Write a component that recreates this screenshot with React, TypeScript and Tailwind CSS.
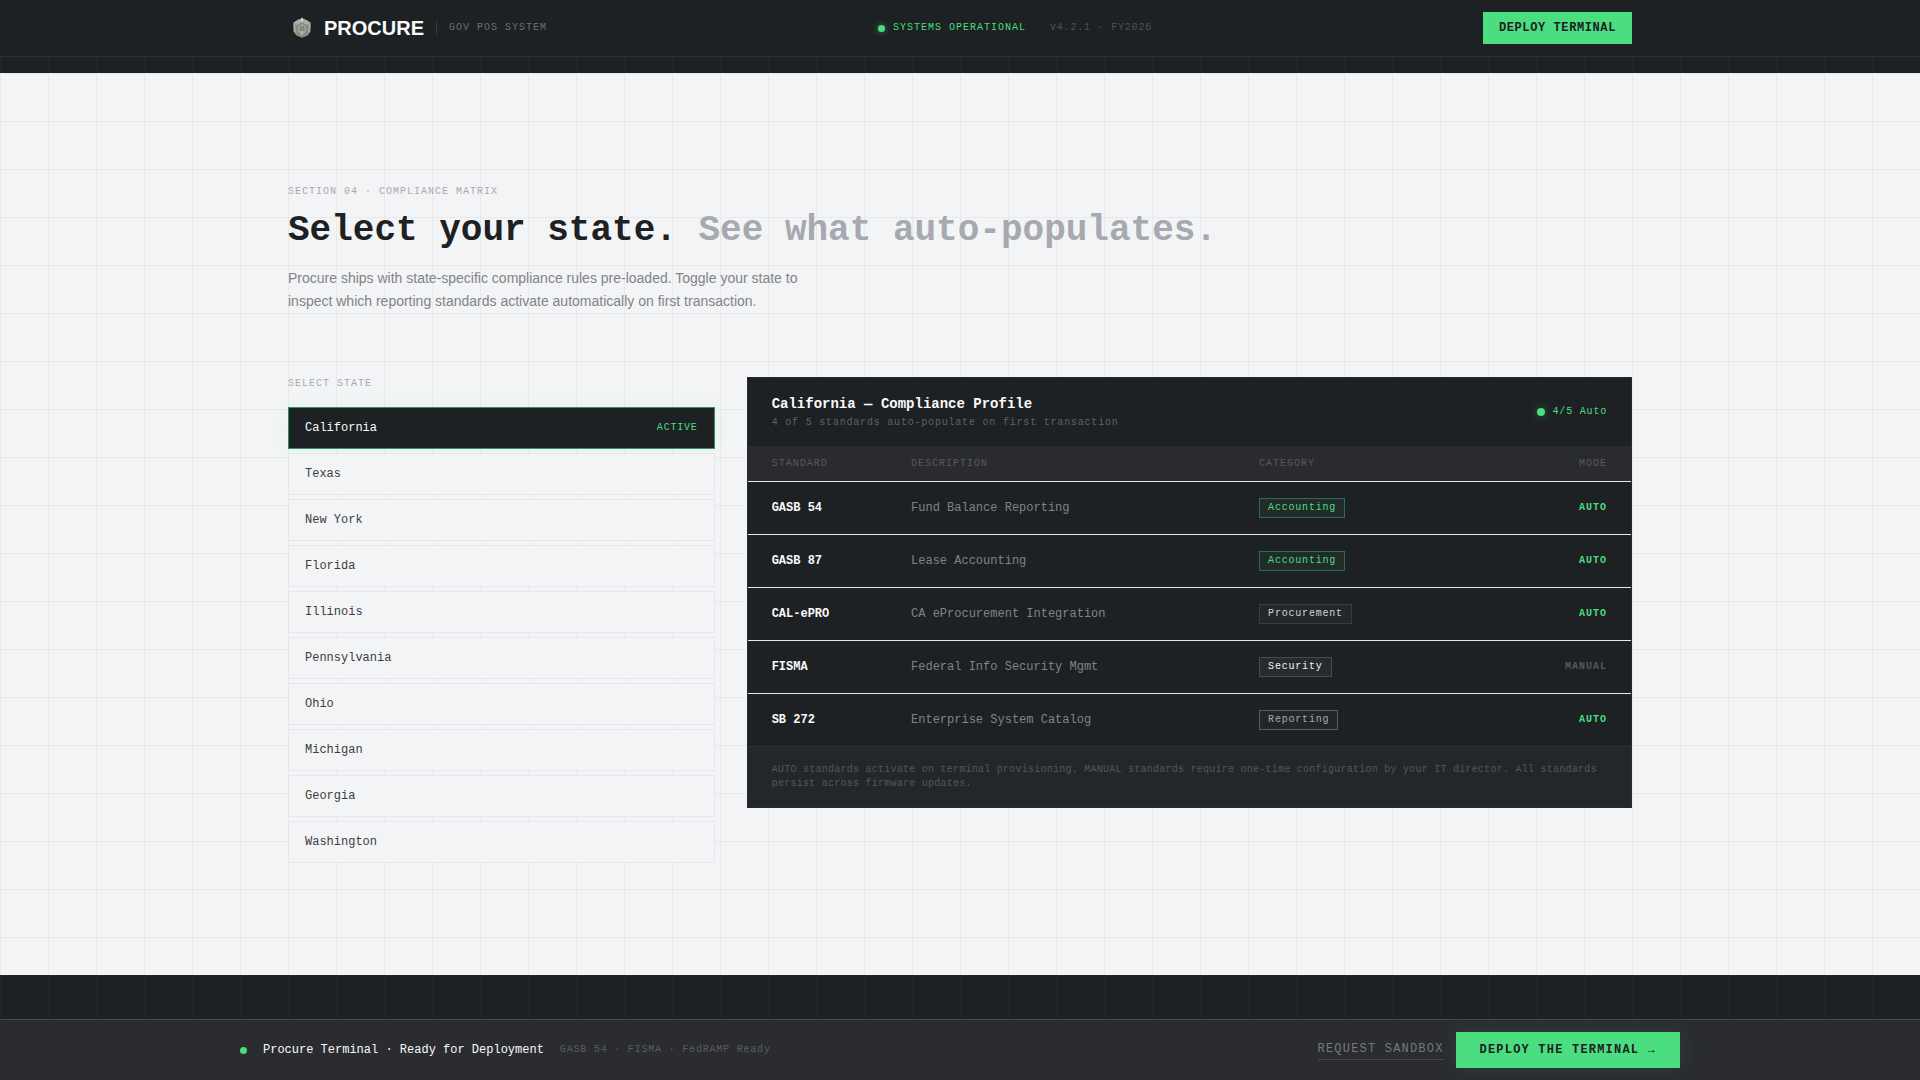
import { useState } from "react";
import clsx from "clsx";

type Category = "Accounting" | "Procurement" | "Security" | "Reporting";

interface Standard {
  code: string;
  description: string;
  category: Category;
  auto: boolean;
}

const STATES = [
  "California",
  "Texas",
  "New York",
  "Florida",
  "Illinois",
  "Pennsylvania",
  "Ohio",
  "Michigan",
  "Georgia",
  "Washington",
];

const STANDARDS: Standard[] = [
  { code: "GASB 54", description: "Fund Balance Reporting", category: "Accounting", auto: true },
  { code: "GASB 87", description: "Lease Accounting", category: "Accounting", auto: true },
  { code: "CAL-ePRO", description: "CA eProcurement Integration", category: "Procurement", auto: true },
  { code: "FISMA", description: "Federal Info Security Mgmt", category: "Security", auto: false },
  { code: "SB 272", description: "Enterprise System Catalog", category: "Reporting", auto: true },
];

const CATEGORY_STYLES: Record<Category, string> = {
  Accounting: "border-[#2f6a4a] bg-[#212b2a] text-[#4ade80]",
  Procurement: "border-[#3a3d40] bg-[#25282b] text-[#d1d5db]",
  Security: "border-[#484b4e] bg-[#282b2e] text-[#f3f4f6]",
  Reporting: "border-[#5a5d60] bg-[#232629] text-[#a7a9af]",
};

function Logo() {
  return (
    <svg className="size-7" viewBox="0 0 28 28" aria-hidden="true">
      <path d="M14 4.5 18.5 6 22.8 9 22.5 17.8 19.5 21.5 14 23.8 8.5 21.5 5.5 17.8 5.2 9 9.5 6Z" fill="#8f938e" />
      <path d="M14 4.5 18.5 6 22.8 9 18.5 11 14 8.5 9.5 11 5.2 9 9.5 6Z" fill="#a9ada8" />
      <path d="M9 12 14 9 19 12 18.5 18.5 14 21.5 9.5 18.5Z" fill="#a0a39a" stroke="#737771" strokeWidth="0.8" />
      <path d="M12 12.5h4v4h-4z" fill="#8b8e83" stroke="#777a71" strokeWidth="0.6" />
      <path d="M13 17.5h2v3.5h-2z" fill="#b9b999" />
      <path d="M14 3 15.3 6 14 7.5 12.7 6Z" fill="#e1e4e0" />
      <path d="M6.3 10 7.2 18M21.7 10 20.8 18" stroke="#b4b8b2" strokeWidth="1" fill="none" />
    </svg>
  );
}

function Header() {
  return (
    <header className="border-b border-[#2c3033] bg-[#1d2123]">
      <div className="mx-auto flex h-14 max-w-[1440px] items-center justify-between px-12">
        <div className="flex items-center">
          <Logo />
          <span className="ml-2 font-['Liberation_Sans',sans-serif] text-xl font-bold text-[#f9fafb]">PROCURE</span>
          <span className="ml-3 h-3.5 w-px bg-[#3a3d42]" />
          <span className="ml-3 text-[10px] leading-4 tracking-widest text-[#6b6e72]">GOV POS SYSTEM</span>
        </div>
        <div className="flex items-center gap-6 text-[10px] leading-4">
          <div className="flex items-center gap-2 text-[#4ade80]">
            <span className="mt-px size-[7px] rounded-full bg-[#4ade80] shadow-[0_0_6px_rgba(74,222,128,0.6)]" />
            <span className="tracking-widest">SYSTEMS OPERATIONAL</span>
          </div>
          <span className="tracking-[0.08em] text-[#505357]">v4.2.1 · FY2026</span>
        </div>
        <button type="button" className="h-8 bg-[#4ade80] px-4 text-xs font-bold tracking-wider text-[#1d2123]">
          DEPLOY TERMINAL
        </button>
      </div>
    </header>
  );
}

function StatePicker({ selected, onSelect }: { selected: string; onSelect: (name: string) => void }) {
  return (
    <div className="col-span-4">
      <p className="mb-4 text-[10px] leading-[14px] tracking-widest text-[#a7a9af]">SELECT STATE</p>
      <div className="flex flex-col gap-1">
        {STATES.map((name) => {
          const active = name === selected;
          return (
            <button
              key={name}
              type="button"
              onClick={() => onSelect(name)}
              className={clsx(
                "flex h-[42px] items-center justify-between border px-4 text-xs",
                active
                  ? "border-[#31915a] bg-[#1d2123] text-[#f9fafb] shadow-[0_0_20px_rgba(74,222,128,0.08)]"
                  : "border-[#e5e7ea] bg-[#f3f4f6] text-[#3a3d42]"
              )}
            >
              <span>{name}</span>
              {active && <span className="text-[10px] tracking-[0.08em] text-[#4ade80]">ACTIVE</span>}
            </button>
          );
        })}
      </div>
    </div>
  );
}

function ComplianceProfile({ state }: { state: string }) {
  const autoCount = STANDARDS.filter((s) => s.auto).length;

  return (
    <div className="col-span-8 self-start border border-[#2a2b30] bg-[#1d2123]">
      <div className="flex h-[68px] items-center justify-between px-6">
        <div>
          <h3 className="text-sm font-bold text-[#f9fafb]">{state} — Compliance Profile</h3>
          <p className="mt-px text-[10px] leading-4 tracking-[0.08em] text-[#5f6267]">
            {autoCount} of {STANDARDS.length} standards auto-populate on first transaction
          </p>
        </div>
        <div className="flex items-center gap-2 text-[#4ade80]">
          <span className="size-2 rounded-full bg-[#4ade80] shadow-[0_0_8px_rgba(74,222,128,0.4)]" />
          <span className="text-[10px] leading-4 tracking-[0.08em]">
            {autoCount}/{STANDARDS.length} Auto
          </span>
        </div>
      </div>

      <table className="w-full table-fixed border-separate border-spacing-0 text-left">
        <thead>
          <tr className="h-9 bg-[#2a2b30] text-[10px] tracking-widest text-[#57595e]">
            <th className="w-[18.5%] border-b border-[#e5e7eb] pl-6 font-normal">STANDARD</th>
            <th className="w-[39.4%] border-b border-[#e5e7eb] font-normal">DESCRIPTION</th>
            <th className="w-[23.6%] border-b border-[#e5e7eb] font-normal">CATEGORY</th>
            <th className="w-[18.5%] border-b border-[#e5e7eb] pr-6 text-right font-normal">MODE</th>
          </tr>
        </thead>
        <tbody className="text-xs [&>tr:last-child>td]:border-[#2f3235] [&_td]:h-[53px] [&_td]:border-b [&_td]:border-[#e5e7eb]">
          {STANDARDS.map((s) => (
            <tr key={s.code}>
              <td className="pl-6 font-bold text-[#f9fafb]">{s.code}</td>
              <td className="text-[#808388]">{s.description}</td>
              <td>
                <span
                  className={clsx(
                    "inline-block border px-2 text-[10px] leading-[18px] tracking-[0.08em]",
                    CATEGORY_STYLES[s.category]
                  )}
                >
                  {s.category}
                </span>
              </td>
              <td
                className={clsx(
                  "pr-6 text-right text-[10px] font-bold tracking-widest",
                  s.auto ? "text-[#4ade80]" : "text-[#55585d]"
                )}
              >
                {s.auto ? "AUTO" : "MANUAL"}
              </td>
            </tr>
          ))}
        </tbody>
      </table>

      <p className="bg-[#24272a] px-6 py-4 text-[10px] leading-[14px] tracking-wide text-[#53565b]">
        AUTO standards activate on terminal provisioning. MANUAL standards require one-time configuration by your IT
        director. All standards persist across firmware updates.
      </p>
    </div>
  );
}

function DeployBar() {
  return (
    <footer className="border-t border-[#3c4f4b] bg-[#2a2c30]">
      <div className="mx-auto flex h-[60px] max-w-[1440px] items-center justify-between">
        <div className="flex items-center gap-4">
          <span className="size-[7px] rounded-full bg-[#4ade80]" />
          <span className="text-xs text-[#f9fafb]">Procure Terminal · Ready for Deployment</span>
          <span className="text-[10px] leading-4 tracking-[0.08em] text-[#5a5d62]">GASB 54 · FISMA · FedRAMP Ready</span>
        </div>
        <div className="flex items-center gap-3">
          <a href="#sandbox" className="border-b border-[#45484d] pb-0.5 text-xs tracking-widest text-[#75787d]">
            REQUEST SANDBOX
          </a>
          <button
            type="button"
            className="h-9 bg-[#4ade80] px-6 text-xs font-bold tracking-widest text-[#1d2123] shadow-[0_0_20px_rgba(74,222,128,0.12)]"
          >
            DEPLOY THE TERMINAL →
          </button>
        </div>
      </div>
    </footer>
  );
}

export default function App() {
  const [selected, setSelected] = useState("California");

  return (
    <div className="flex min-h-screen flex-col bg-[#1d2123] bg-[linear-gradient(to_right,#23282a_1px,transparent_1px)] bg-[size:48px_48px] font-['Liberation_Mono',monospace]">
      <Header />
      <main className="mt-4 bg-[#f3f4f6] bg-[linear-gradient(to_right,#e7e9eb_1px,transparent_1px),linear-gradient(to_bottom,#e7e9eb_1px,transparent_1px)] bg-[size:48px_48px] py-28">
        <div className="mx-auto max-w-[1440px] px-12">
          <p className="mb-3 text-[10px] leading-[14px] tracking-widest text-[#a7a9af]">
            SECTION 04 · COMPLIANCE MATRIX
          </p>
          <h2 className="mb-4 text-4xl font-bold text-[#1d2123]">
            Select your state. <span className="text-[#a7a9b0]">See what auto-populates.</span>
          </h2>
          <p className="mb-16 max-w-[520px] font-['Liberation_Sans',sans-serif] text-sm leading-[23px] text-[#808388]">
            Procure ships with state-specific compliance rules pre-loaded. Toggle your state to inspect which reporting
            standards activate automatically on first transaction.
          </p>
          <div className="grid grid-cols-12 gap-8">
            <StatePicker selected={selected} onSelect={setSelected} />
            <ComplianceProfile state={selected} />
          </div>
        </div>
      </main>
      <div className="min-h-11 flex-1" />
      <DeployBar />
    </div>
  );
}
